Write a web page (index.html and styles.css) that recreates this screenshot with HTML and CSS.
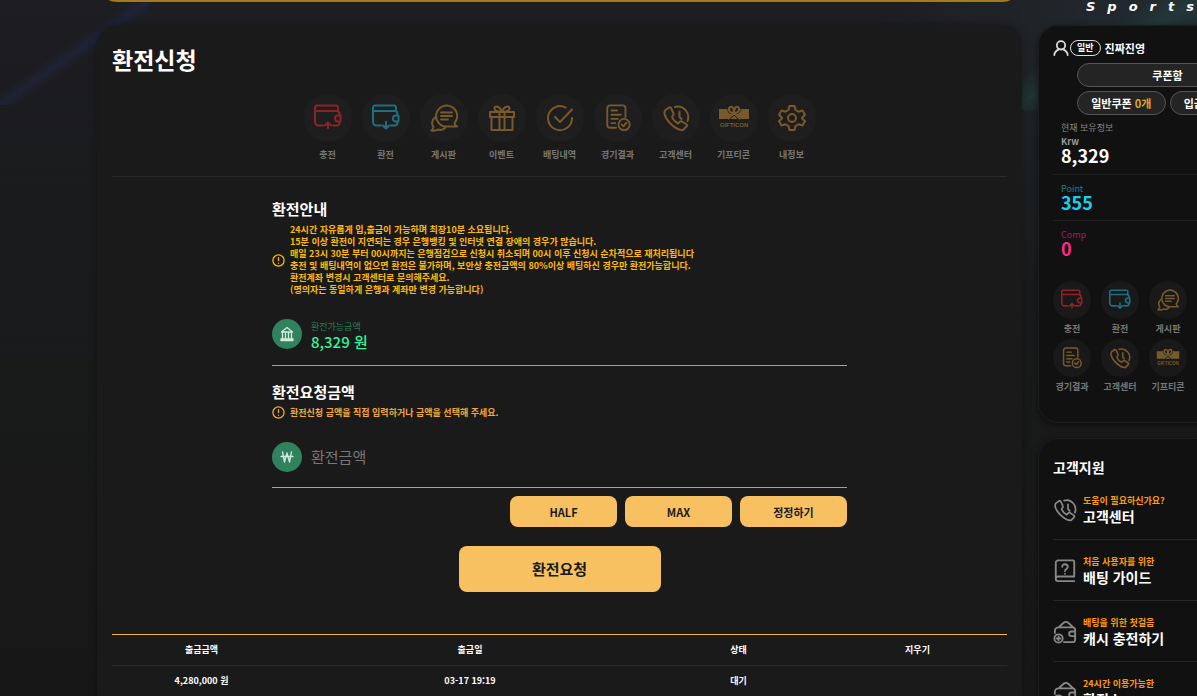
FILE: index.html
```html
<!DOCTYPE html>
<html lang="ko">
<head>
<meta charset="utf-8">
<title>환전신청</title>
<link rel="stylesheet" href="styles.css">
</head>
<body>
<svg class="sprite" aria-hidden="true">
  <symbol id="wallet-up" viewBox="0 0 28 28">
    <path d="M24 7V3.500a2 2 0 0 0-2-2H3a2 2 0 0 0-2 2V18a3.500 3.500 0 0 0 3.500 3.500H9M1 7h21.500a3 3 0 0 1 3 3v1M25.500 18c0 2-1 3.500-3 3.500H19M26.500 11.500h-2.500a3 3 0 0 0 0 6h2.500zM14 24v-5M11 21.500l3-3 3 3"/>
  </symbol>
  <symbol id="wallet-down" viewBox="0 0 28 28">
    <path d="M24 7V3.500a2 2 0 0 0-2-2H3a2 2 0 0 0-2 2V18a3.500 3.500 0 0 0 3.500 3.500H9M1 7h21.500a3 3 0 0 1 3 3v1M25.500 18c0 2-1 3.500-3 3.500H19M26.500 11.500h-2.500a3 3 0 0 0 0 6h2.500zM14 18v6M11 21.500l3 3 3-3"/>
  </symbol>
  <symbol id="chat" viewBox="0 0 28 28">
    <path d="M24.500 19a10.500 10.500 0 1 0-8.500 3.500h11c-1.300-1-2.200-2-2.500-3.500zM5.500 13c-4 3-4 7.500-2 10 0 1.500-1 2.500-2 3.500 3 .5 5 0 6.500-1 2.500.8 5 .3 7-1.500M11 8.500h11M11 12h11M11 15.500h7"/>
  </symbol>
  <symbol id="gift" viewBox="0 0 28 28">
    <path d="M2 8h24v5H2zM3.500 13v13h21V13M11.500 8v18M16.500 8v18M14 8C10 8 6 6.500 6.500 4S12 2 14 8zM14 8c4 0 8-1.500 7.500-4S16 2 14 8z"/>
  </symbol>
  <symbol id="check" viewBox="0 0 28 28">
    <path d="M19.500 3.500A12 12 0 1 0 26 14M9 13l5 5L26 5.500"/>
  </symbol>
  <symbol id="report" viewBox="0 0 28 30">
    <path d="M12 25.500H5.500a3 3 0 0 1-3-3V4.500a3 3 0 0 1 3-3H19a3 3 0 0 1 3 3V14M7 7h6M7 11.500h10M7 16h7M7 20.500h4"/>
    <circle cx="20.500" cy="22" r="6"/>
    <path d="M18 22l2 2 3-4"/>
  </symbol>
  <symbol id="phone" viewBox="0 0 28 28">
    <path d="M7 3.500 3.500 6c-2 2-1 7 3.500 12s10 8.500 14 8l3.500-3.500c1-1 .5-2-.5-2.500l-4-2.500c-1-.5-2-.2-2.500.5l-1.500 1.500c-3-1.500-5-4-6-6.500L11 11.500c.8-.8.800-1.500.3-2.500L9 4c-.5-.8-1.200-1-2-.5zM13 3a10.500 10.500 0 0 1 12.500 14M17.500 7.500V13l2 2"/>
  </symbol>
  <symbol id="gifticon" viewBox="0 0 32 28">
    <path class="solid" d="M1 5h8.500a5 5 0 0 0 2.500 5h2l-5 5H1zM31 5h-8.500a5 5 0 0 1-2.500 5h-2l5 5h8zM12.500 15l3.500-3.500 3.500 3.500z"/>
    <path d="M16 9c-6 0-6-5-3.500-6S16 6 16 9zM16 9c6 0 6-5 3.500-6S16 6 16 9zM16 9l-5.500 5.500M16 9l5.500 5.500"/>
    <text class="gifticon-word" x="16" y="23" text-anchor="middle">GIFTICON</text>
  </symbol>
  <symbol id="gear" viewBox="0 0 28 28">
    <circle cx="14" cy="14" r="4"/>
    <path d="M11.500 2h5l1 4 3 1.700 4-1.200 2.500 4.300-3 2.900v.6l3 2.900-2.500 4.300-4-1.200-3 1.700-1 4h-5l-1-4-3-1.700-4 1.200L1 17.200l3-2.900v-.6l-3-2.900 2.500-4.300 4 1.200 3-1.700z"/>
  </symbol>
  <symbol id="alert" viewBox="0 0 14 14">
    <circle cx="7" cy="7" r="6"/>
    <path d="M7 4v3M7 9.900v.1"/>
  </symbol>
  <symbol id="bank" viewBox="0 0 16 16">
    <path d="M8 1.500 2.500 6h11zM3.500 6v7M6.500 6v7M9.500 6v7M12.500 6v7M2 13h12v1.500H2z"/>
  </symbol>
  <symbol id="won" viewBox="0 0 16 16">
    <path d="M3.500 3l2 10L8 4l2.500 9 2-10M2 7.500h12"/>
  </symbol>
  <symbol id="user" viewBox="0 0 18 18">
    <circle cx="9" cy="6" r="4.700"/>
    <path d="M1.500 17c0-3 2-5 5-6.500M16.500 17c0-3-2-5-5-6.500"/>
  </symbol>
  <symbol id="guide" viewBox="0 0 24 26">
    <path d="M22 19V3a1.500 1.500 0 0 0-1.500-1.500h-16A2.500 2.500 0 0 0 2 4v17.500A2.500 2.500 0 0 0 4.500 24H22M22 19H4.500A2.500 2.500 0 0 0 2 21.500M9 8.500C9 4.500 15 5 15 8.500c0 2.500-3 2-3 4.500M12 15.900v.1"/>
  </symbol>
  <symbol id="cash" viewBox="0 0 26 26">
    <path d="M2 14v-2a4 4 0 0 1 4-4h15a3 3 0 0 1 3 3v10a3 3 0 0 1-3 3h-9M6 8l5.500-5a3.500 3.500 0 0 1 5 0L22 8M24 12.500h-4a2.500 2.500 0 0 0 0 5h4z"/>
    <circle cx="6" cy="20" r="4.500"/>
    <path d="M6 18v4M4 20h4"/>
  </symbol>
</svg>

<div class="page">
  <div class="content">
    <div class="banner-slot"><div class="banner"></div></div>
    <main class="panel main">
      <h1 class="title">환전신청</h1>
      <nav class="menu">
        <a class="menu-item" href="#"><span class="disc red"><svg class="icon"><use href="#wallet-up"/></svg></span>충전</a>
        <a class="menu-item" href="#"><span class="disc teal"><svg class="icon"><use href="#wallet-down"/></svg></span>환전</a>
        <a class="menu-item" href="#"><span class="disc"><svg class="icon"><use href="#chat"/></svg></span>게시판</a>
        <a class="menu-item" href="#"><span class="disc"><svg class="icon"><use href="#gift"/></svg></span>이벤트</a>
        <a class="menu-item" href="#"><span class="disc"><svg class="icon"><use href="#check"/></svg></span>배팅내역</a>
        <a class="menu-item" href="#"><span class="disc"><svg class="icon"><use href="#report"/></svg></span>경기결과</a>
        <a class="menu-item" href="#"><span class="disc"><svg class="icon"><use href="#phone"/></svg></span>고객센터</a>
        <a class="menu-item" href="#"><span class="disc"><svg class="icon wide"><use href="#gifticon"/></svg></span>기프티콘</a>
        <a class="menu-item" href="#"><span class="disc"><svg class="icon"><use href="#gear"/></svg></span>내정보</a>
      </nav>

      <form class="form">
        <h2 class="subtitle">환전안내</h2>
        <div class="notice notice-info">
          <svg class="alert"><use href="#alert"/></svg>
          <p class="notice-text">24시간 자유롭게 입,출금이 가능하며 최장10분 소요됩니다.<br>15분 이상 환전이 지연되는 경우 은행뱅킹 및 인터넷 연결 장애의 경우가 많습니다.<br>매일 23시 30분 부터 00시까지는 은행점검으로 신청시 취소되며 00시 이후 신청시 순차적으로 재처리됩니다<br>충전 및 배팅내역이 없으면 환전은 불가하며, 보안상 충전금액의 80%이상 배팅하신 경우만 환전가능합니다.<br>환전계좌 변경시 고객센터로 문의해주세요.<br>(명의자는 동일하게 은행과 계좌만 변경 가능합니다)</p>
        </div>
        <div class="field field-available">
          <span class="badge"><svg class="badge-icon"><use href="#bank"/></svg></span>
          <div class="available">
            <div class="available-label">환전가능금액</div>
            <div class="available-value">8,329 원</div>
          </div>
        </div>
        <h2 class="subtitle"><label for="amount">환전요청금액</label></h2>
        <div class="notice">
          <svg class="alert"><use href="#alert"/></svg>
          <p class="notice-text">환전신청 금액을 직접 입력하거나 금액을 선택해 주세요.</p>
        </div>
        <div class="field">
          <span class="badge"><svg class="badge-icon"><use href="#won"/></svg></span>
          <input class="amount" id="amount" type="text" placeholder="환전금액">
        </div>
        <div class="quick">
          <button class="btn" type="button">HALF</button>
          <button class="btn" type="button">MAX</button>
          <button class="btn" type="button">정정하기</button>
        </div>
        <button class="btn submit" type="submit">환전요청</button>
      </form>

      <table class="history">
        <thead>
          <tr><th>출금금액</th><th class="col-date">출금일</th><th>상태</th><th>지우기</th></tr>
        </thead>
        <tbody>
          <tr><td>4,280,000 원</td><td>03-17 19:19</td><td>대기</td><td></td></tr>
        </tbody>
      </table>
    </main>
  </div>

  <aside class="side">
    <div class="brand">Sports</div>
    <section class="panel side-panel account">
      <div class="user"><svg class="user-icon"><use href="#user"/></svg><span class="level">일반</span><b class="user-name">진짜진영</b></div>
      <div class="coupons">
        <button class="pill pill-wide" type="button">쿠폰함</button>
        <button class="pill" type="button">일반쿠폰 <span class="count">0개</span></button>
        <button class="pill" type="button">입금쿠폰 <span class="count">0개</span></button>
      </div>
      <div class="balance-caption">현재 보유정보</div>
      <div class="balance krw"><div class="balance-name">Krw</div><div class="balance-value">8,329</div></div>
      <div class="balance point"><div class="balance-name">Point</div><div class="balance-value">355</div></div>
      <div class="balance comp"><div class="balance-name">Comp</div><div class="balance-value">0</div></div>
      <nav class="side-menu">
        <a class="side-item" href="#"><span class="disc small red"><svg class="icon"><use href="#wallet-up"/></svg></span>충전</a>
        <a class="side-item" href="#"><span class="disc small teal"><svg class="icon"><use href="#wallet-down"/></svg></span>환전</a>
        <a class="side-item" href="#"><span class="disc small"><svg class="icon"><use href="#chat"/></svg></span>게시판</a>
        <a class="side-item" href="#"><span class="disc small"><svg class="icon"><use href="#report"/></svg></span>경기결과</a>
        <a class="side-item" href="#"><span class="disc small"><svg class="icon"><use href="#phone"/></svg></span>고객센터</a>
        <a class="side-item" href="#"><span class="disc small"><svg class="icon wide"><use href="#gifticon"/></svg></span>기프티콘</a>
      </nav>
    </section>
    <section class="panel side-panel support">
      <h2 class="subtitle support-title">고객지원</h2>
      <a class="support-item" href="#"><svg class="support-icon"><use href="#phone"/></svg><span><span class="hint">도움이 필요하신가요?</span><span class="support-name">고객센터</span></span></a>
      <a class="support-item" href="#"><svg class="support-icon"><use href="#guide"/></svg><span><span class="hint">처음 사용자를 위한</span><span class="support-name">배팅 가이드</span></span></a>
      <a class="support-item" href="#"><svg class="support-icon"><use href="#cash"/></svg><span><span class="hint">배팅을 위한 첫걸음</span><span class="support-name">캐시 충전하기</span></span></a>
      <a class="support-item" href="#"><svg class="support-icon"><use href="#cash"/></svg><span><span class="hint">24시간 이용가능한</span><span class="support-name">환전소</span></span></a>
    </section>
  </aside>
</div>
</body>
</html>
```
FILE: styles.css
```css
* { box-sizing: border-box; }

body {
  margin: 0;
  height: 100vh;
  overflow: hidden;
  color: #fff;
  font-family: "Noto Sans CJK KR", sans-serif;
  font-size: 9px;
  line-height: 12px;
  background:
    linear-gradient(to bottom right, transparent 44%, rgba(32, 40, 72, .5) 50%, transparent 56%) 0 0 / 150px 105px no-repeat,
    linear-gradient(to bottom right, transparent 38%, rgba(34, 66, 62, .55) 50%, transparent 62%) 100% 0 / 190px 110px no-repeat,
    radial-gradient(circle at 100% 0, rgba(38, 54, 58, .6), transparent 320px),
    linear-gradient(#1d1d22, #1a1b1c 260px, #171717);
}

h1, h2, p { margin: 0; }
a { color: inherit; text-decoration: none; }
button, input { font: inherit; color: inherit; }

.sprite { position: absolute; width: 0; height: 0; }

svg {
  flex: none;
  fill: none;
  stroke: currentColor;
  stroke-width: 2;
  stroke-linecap: round;
  stroke-linejoin: round;
}

.solid { fill: currentColor; stroke: none; }

.gifticon-word {
  fill: currentColor;
  stroke: none;
  font: 700 6px "Liberation Sans", sans-serif;
}

.page {
  display: flex;
  gap: 16px;
  min-width: 1297px;
  padding-left: 97px;
}

.content { flex: 1; min-width: 0; }

.banner-slot {
  display: flex;
  align-items: flex-end;
  height: 2px;
  margin-bottom: 23px;
  overflow: hidden;
}

.banner {
  flex: 1;
  height: 48px;
  border: 2px solid #a47a1c;
  border-radius: 20px;
  background: #1a0c0c;
}

.panel { border-radius: 20px; }

.main {
  padding: 15px;
  background: #1a1a1a;
  box-shadow: 0 0 8px rgba(0, 0, 0, .3);
}

.title { font-size: 23px; line-height: 38px; }

.menu {
  display: flex;
  justify-content: center;
  gap: 10px;
  padding: 16px 0 15px;
  border-bottom: 1px solid #2a2a2a;
}

.menu-item, .side-item {
  display: flex;
  flex-direction: column;
  align-items: center;
  color: #777;
  font-weight: 700;
}

.menu-item { width: 48px; gap: 7px; }

.disc {
  display: grid;
  place-items: center;
  width: 48px;
  height: 48px;
  border-radius: 50%;
  background: #1e1e1e;
  color: #77592b;
}

.disc.small { width: 38px; height: 38px; background: #191919; }
.disc.red { color: #8b2327; }
.disc.teal { color: #1f6f80; }
.icon { width: 28px; height: 28px; }
.icon.wide { width: 32px; }
.small .icon { width: 22px; height: 22px; }
.small .icon.wide { width: 24px; }

.form {
  display: flex;
  flex-direction: column;
  max-width: 575px;
  margin: 0 auto;
  padding-top: 20px;
}

.subtitle { font-size: 15px; font-weight: 700; line-height: 24px; }

.notice {
  display: flex;
  align-items: center;
  gap: 5px;
  padding: 2px 0;
  color: #f0a93c;
  font-weight: 700;
}

.notice-info { padding-top: 3px; color: #ffba00; }
.alert { width: 13px; height: 13px; stroke-width: 1.4; }

.field {
  display: flex;
  align-items: center;
  gap: 9px;
  height: 67px;
  margin-bottom: 8px;
  padding-top: 6px;
  border-bottom: 1px solid #d99a3a;
}

.field-available { height: 68px; margin-bottom: 14px; padding-top: 4px; }

.badge {
  display: grid;
  place-items: center;
  width: 30px;
  height: 30px;
  border-radius: 50%;
  background: #30825f;
  color: #d5eadf;
}

.badge-icon { width: 16px; height: 16px; stroke-width: 1.3; }
.available { padding-top: 4px; }
.available-label { color: #2c7a58; }
.available-value { color: #33f59a; font-size: 15px; font-weight: 500; line-height: 18px; }

.amount {
  flex: 1;
  min-width: 0;
  padding: 0;
  border: 0;
  outline: 0;
  background: none;
  font-size: 15px;
  line-height: 24px;
}

.amount::placeholder { color: #777; opacity: 1; }

.quick {
  display: flex;
  justify-content: flex-end;
  gap: 8px;
  margin-bottom: 19px;
}

.btn {
  width: 107px;
  height: 31px;
  padding: 0;
  border: 0;
  border-radius: 8px;
  background: #f7c162;
  color: #1a1a1a;
  font-size: 11px;
  font-weight: 700;
}

.submit {
  align-self: center;
  width: 202px;
  height: 46px;
  font-size: 15px;
}

.history {
  width: 100%;
  margin-top: 42px;
  border-collapse: collapse;
  border-top: 1px solid #f0b54e;
  table-layout: fixed;
  font-weight: 700;
  text-align: center;
}

.history tr { height: 31px; border-bottom: 1px solid #2a2a2a; }
.history th, .history td { padding: 0; }
.col-date { width: 40%; }

.side { flex: none; width: 259px; }

.brand {
  height: 25px;
  padding-left: 48px;
  font: italic 700 13px/14px "DejaVu Sans", sans-serif;
  letter-spacing: 12px;
}

.side-panel {
  padding: 12px 14px;
  border: 1px solid #1d1d1d;
  background: #111;
  box-shadow: 0 2px 6px rgba(0, 0, 0, .5);
}

.account { height: 398px; margin-bottom: 15px; }

.user { display: flex; align-items: center; height: 20px; }
.user-icon { width: 16px; height: 16px; color: #ddd; }

.level {
  margin: 0 4px 0 1px;
  padding: 0 6px;
  border: 1px solid #ddd;
  border-radius: 8px;
  line-height: 14px;
  font-weight: 700;
}

.user-name { font-size: 11px; }

.coupons {
  display: grid;
  grid-template-columns: 1fr 1fr;
  gap: 4px;
  width: 181px;
  margin: 5px auto 7px;
}

.pill {
  height: 24px;
  padding: 0;
  border: 1px solid #555;
  border-radius: 12px;
  background: #242424;
  font-size: 11px;
  font-weight: 700;
}

.pill-wide { grid-column: 1 / -1; }
.count { color: #e0a526; }

.balance-caption { padding-left: 8px; color: #888; }

.balance {
  height: 46px;
  padding: 8px 8px 0;
  border-bottom: 1px solid #1d1d1d;
}

.krw { height: 41px; padding-top: 2px; font-weight: 700; }
.balance-name { color: #999; line-height: 11px; }
.balance-value { font-size: 18px; font-weight: 700; line-height: 17px; }
.point .balance-name { color: #178296; }
.point .balance-value { color: #17d0f0; }
.comp { border-bottom: 0; }
.comp .balance-name { color: #a01b5f; }
.comp .balance-value { color: #ff2a8c; }

.side-menu {
  display: grid;
  grid-template-columns: repeat(3, 48px);
  row-gap: 4px;
  margin: 14px 0 0 -5px;
}

.side-item { gap: 4px; }

.support { padding-top: 16px; }
.support-title { font-size: 14px; }

.support-item {
  display: flex;
  align-items: center;
  gap: 6px;
  height: 61px;
  padding-top: 2px;
  border-bottom: 1px solid #262626;
}

.support-icon { width: 24px; height: 24px; color: #888; }
.hint { display: block; color: #ff9c00; font-weight: 700; }
.support-name { display: block; font-size: 14px; font-weight: 700; line-height: 19px; }
```
